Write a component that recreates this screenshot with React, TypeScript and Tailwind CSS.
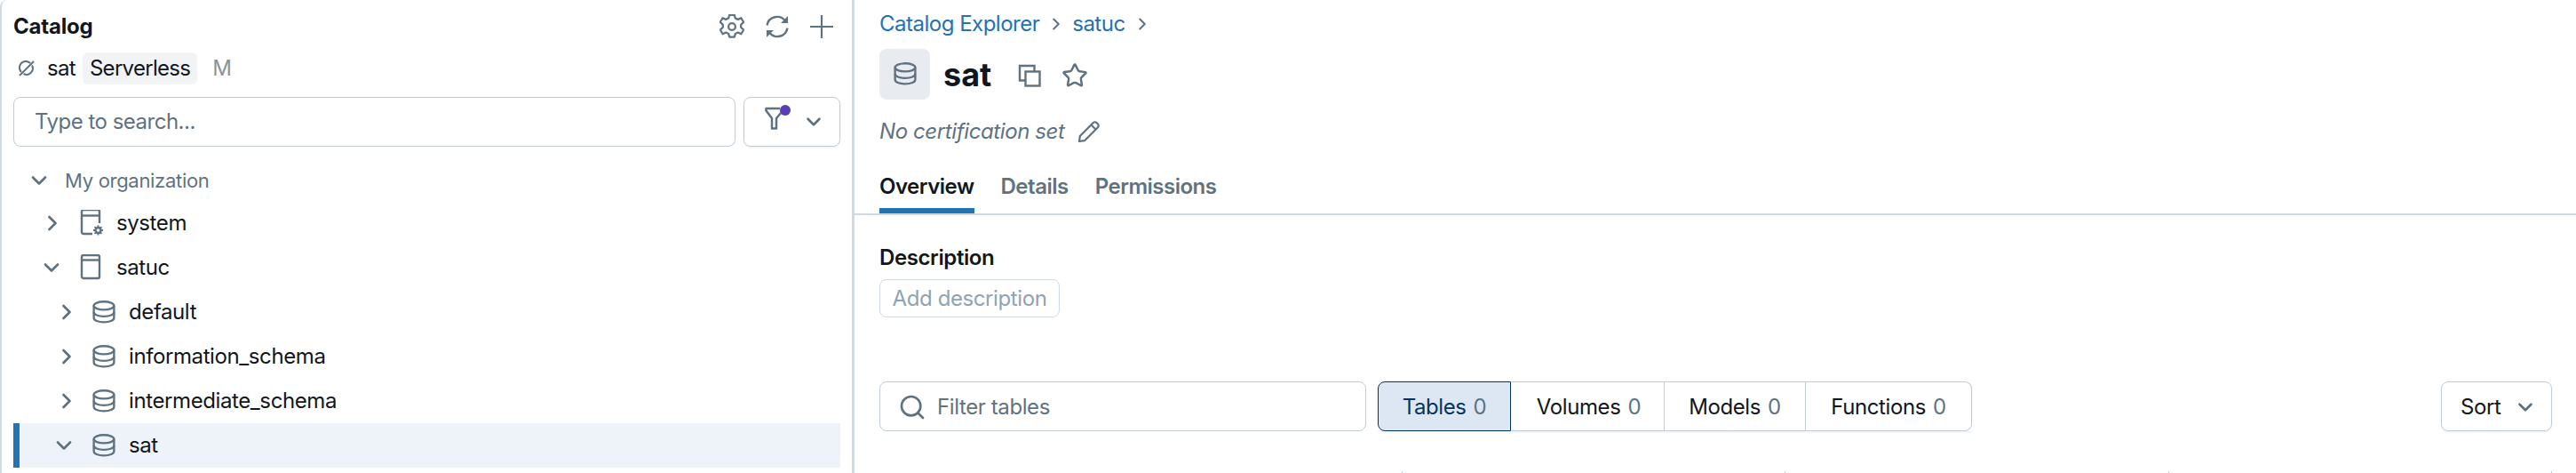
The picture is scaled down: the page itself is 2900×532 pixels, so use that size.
import type { ReactNode } from 'react';
import { ChevronDown, ChevronRight, Search, Star } from 'lucide-react';

const font = "font-['Inter','Liberation_Sans',sans-serif]";

function DatabaseIcon({ className }: { className?: string }) {
  return (
    <svg viewBox="0 0 16 16" fill="none" stroke="currentColor" strokeWidth="1.45" className={className}>
      <ellipse cx="8" cy="3.6" rx="7" ry="2.8" />
      <path d="M1 3.6v8.4c0 1.8 3 3 7 3s7-1.2 7-3V3.6" />
      <path d="M1 8c0 1.8 3 3 7 3s7-1.2 7-3" />
    </svg>
  );
}

function CatalogIcon({ gear }: { gear?: boolean }) {
  return (
    <svg viewBox="0 0 26 30" fill="none" className="h-[30px] w-[26px] shrink-0 text-[#5f7281]">
      <path
        d={gear ? 'M14 27H4a2 2 0 0 1-2-2V2a2 2 0 0 1 2-2h16a2 2 0 0 1 2 2v13' : 'M4 1h16a2 2 0 0 1 2 2v22a2 2 0 0 1-2 2H4a2 2 0 0 1-2-2V3a2 2 0 0 1 2-2z'}
        stroke="currentColor"
        strokeWidth="2.4"
      />
      <path d="M2 6.5h20" stroke="currentColor" strokeWidth="2.4" />
      {gear && (
        <>
          <circle cx="20.5" cy="23" r="3" stroke="currentColor" strokeWidth="2.4" />
          <path d="M20.5 17.5v2.4M20.5 26v2.4M15 23h2.4M23.6 23H26M16.6 19.1l1.7 1.7M22.7 25.2l1.7 1.7M16.6 26.9l1.7-1.7M22.7 20.8l1.7-1.7" stroke="currentColor" strokeWidth="2" />
        </>
      )}
    </svg>
  );
}

function GearIcon() {
  return (
    <svg viewBox="2 2 20 20" fill="none" stroke="currentColor" strokeWidth="1.6" strokeLinejoin="round" className="h-[28px] w-[28px]">
      <path d="M10 2.6h4l.7 2.6 2.1 1 2.6-1.2 2 3.4-2.1 1.9v2.3l2.1 1.9-2 3.4-2.6-1.2-2.1 1-.7 2.6h-4l-.7-2.6-2.1-1-2.6 1.2-2-3.4 2.1-1.9v-2.3L2.5 8.4l2-3.4 2.6 1.2 2.1-1z" />
      <circle cx="12" cy="12" r="2.8" />
    </svg>
  );
}

function RefreshIcon() {
  return (
    <svg viewBox="0 0 26 26" fill="none" className="h-[26px] w-[26px]">
      <path d="M1.5 11.5A11.5 11.5 0 0 1 22 6.5M24.5 14.5A11.5 11.5 0 0 1 4 19.5" stroke="currentColor" strokeWidth="2.4" />
      <path d="M25 1v8h-8zM1 25v-8h8z" fill="currentColor" />
    </svg>
  );
}

function PlusIcon() {
  return (
    <svg viewBox="0 0 26 26" stroke="currentColor" strokeWidth="2.2" className="h-[26px] w-[26px]">
      <path d="M13 0v26M0 13h26" />
    </svg>
  );
}

function FilterIcon() {
  return (
    <svg viewBox="0 0 22 26" fill="none" stroke="currentColor" strokeWidth="2.5" strokeLinejoin="round" className="mb-[8px] h-[26px] w-[22px]">
      <path d="M17 2H1.5v2.5L8 13v11.5h5V13l6-7" />
    </svg>
  );
}

function CopyIcon() {
  return (
    <svg viewBox="0 0 26 26" fill="none" stroke="currentColor" strokeWidth="2.4" className="h-[26px] w-[26px]">
      <path d="M8 18.5H2V2h16.5v6" />
      <rect x="8.5" y="8.5" width="16" height="16" />
    </svg>
  );
}

function PencilIcon() {
  return (
    <svg viewBox="0 0 26 26" fill="none" stroke="currentColor" strokeWidth="2.2" strokeLinejoin="round" className="h-[26px] w-[26px]">
      <path d="M2 24l.8-6L17.8 3a2.6 2.6 0 0 1 3.7 0l1.5 1.5a2.6 2.6 0 0 1 0 3.7L8 23.2z" />
      <path d="M15.5 5.5l5 5" />
    </svg>
  );
}

function SlashedLink() {
  return (
    <svg viewBox="0 0 18 18" fill="none" stroke="currentColor" strokeWidth="2" className="h-[18px] w-[18px] text-[#5f7281]">
      <path d="M3 13A7 7 0 0 1 13 3M15 5.5A7 7 0 0 1 5.5 15" />
      <path d="M1 17L17 1" />
    </svg>
  );
}

function TreeRow({
  name,
  icon,
  open,
  chevronClass,
  active,
}: {
  name: string;
  icon: ReactNode;
  open?: boolean;
  chevronClass: string;
  active?: boolean;
}) {
  const Chevron = open ? ChevronDown : ChevronRight;
  return (
    <div
      className={
        active
          ? 'flex h-[50px] items-center border-l-[7px] border-[#2272b4] bg-[#eef3fa]'
          : 'flex h-[50px] items-center border-l-[7px] border-transparent'
      }
    >
      <div className={chevronClass}>
        <Chevron className="h-[28px] w-[28px] text-[#5f7281]" strokeWidth={2.3} />
      </div>
      {icon}
      <span className="ml-[15px] text-[24px] tracking-[-0.4px] text-[#11171c]">{name}</span>
    </div>
  );
}

function SegmentButton({ label, className }: { label: string; className: string }) {
  return (
    <div className={className}>
      <span>{label}</span>
      <span className="text-[#5f7281]">0</span>
    </div>
  );
}

export default function App() {
  const dbIcon = <DatabaseIcon className="h-[26px] w-[26px] shrink-0 text-[#5f7281]" />;

  return (
    <div className={`flex h-[532px] w-[2900px] overflow-hidden bg-white text-[#11171c] ${font}`}>
      {/* left tree panel */}
      <aside className="w-[962px] shrink-0 rounded-tl-lg border-l-2 border-r-[3px] border-[#d1d9e1] pl-[13px] pr-[13px]">
        <div className="flex h-[59px] items-center justify-between pr-[8px]">
          <h2 className="text-[24px] font-bold tracking-[-0.2px]">Catalog</h2>
          <div className="flex items-center gap-[24px] text-[#5f7281]">
            <GearIcon />
            <RefreshIcon />
            <PlusIcon />
          </div>
        </div>
        <div className="flex h-[36px] items-center pl-[6px] text-[24px] tracking-[-0.7px]">
          <SlashedLink />
          <span className="ml-[14px]">sat</span>
          <span className="ml-[8px] rounded-[6px] bg-[#f2f3f5] px-2 leading-[36px]">Serverless</span>
          <span className="ml-[17px] text-[#8b9299]">M</span>
        </div>
        <div className="mt-[14px] flex gap-[9px]">
          <div className="flex h-[56px] flex-1 items-center rounded-lg border border-[#c0cdd8] pl-[23px] text-[24px] tracking-[-0.5px] text-[#5f7281]">
            Type to search...
          </div>
          <div className="relative flex h-[56px] w-[109px] items-center rounded-lg border border-[#c0cdd8] pl-[23px] text-[#5f7281] shadow-[0_1px_2px_rgba(0,0,0,0.08)]">
            <FilterIcon />
            <span className="absolute left-[40px] top-[8px] h-[12px] w-[12px] rounded-full bg-[#5b3eb5]" />
            <ChevronDown className="ml-[20px] h-[26px] w-[26px]" strokeWidth={2.5} />
          </div>
        </div>
        <div className="mt-[15px] flex h-[46px] items-center pl-[15px] text-[22px] tracking-[-0.3px] text-[#5f7281]">
          <ChevronDown className="h-[28px] w-[28px]" strokeWidth={2.3} />
          <span className="ml-[15px]">My organization</span>
        </div>
        <TreeRow name="system" icon={<CatalogIcon gear />} chevronClass="ml-[23px] mr-[17px]" />
        <TreeRow name="satuc" icon={<CatalogIcon />} open chevronClass="ml-[22px] mr-[18px]" />
        <TreeRow name="default" icon={dbIcon} chevronClass="ml-[39px] mr-[15px]" />
        <TreeRow name="information_schema" icon={dbIcon} chevronClass="ml-[39px] mr-[15px]" />
        <TreeRow name="intermediate_schema" icon={dbIcon} chevronClass="ml-[39px] mr-[15px]" />
        <TreeRow name="sat" icon={dbIcon} open active chevronClass="ml-[36px] mr-[18px]" />
      </aside>

      {/* detail panel */}
      <main className="min-w-0 flex-1">
        <div className="px-[28px]">
          <div className="flex h-[54px] items-center text-[24px] tracking-[-0.5px] text-[#2272b4]">
            <span>Catalog Explorer</span>
            <ChevronRight className="ml-[8px] mr-[7px] h-[22px] w-[22px] text-[#5f7281]" strokeWidth={2.2} />
            <span>satuc</span>
            <ChevronRight className="ml-[8px] h-[22px] w-[22px] text-[#5f7281]" strokeWidth={2.2} />
          </div>
          <div className="flex h-[58px] items-center">
            <div className="flex h-[57px] w-[57px] items-center justify-center rounded-lg bg-[#e8ecf0]">
              <DatabaseIcon className="h-[26px] w-[26px] text-[#5f7281]" />
            </div>
            <h1 className="ml-[15px] mt-[2px] text-[36px] font-bold">sat</h1>
            <div className="ml-[30px] mt-[4px] flex items-center gap-[23px] text-[#5f7281]">
              <CopyIcon />
              <Star className="h-[30px] w-[30px]" strokeWidth={2} />
            </div>
          </div>
          <div className="mt-[18px] flex h-[36px] items-center text-[24px] italic tracking-[-0.4px] text-[#5f7281]">
            <span>No certification set</span>
            <span className="ml-[14px] not-italic">
              <PencilIcon />
            </span>
          </div>
        </div>
        <div className="mt-[20px] flex h-[56px] gap-[30px] border-b-2 border-[#d1d9e1] px-[28px] pt-[6px] text-[24px] font-semibold tracking-[-0.5px] text-[#5f7281]">
          <div className="border-b-[6px] border-[#2272b4] text-[#11171c]">Overview</div>
          <div>Details</div>
          <div>Permissions</div>
        </div>
        <div className="pl-[28px] pr-[27px]">
          <div className="mt-[32px] text-[24px] font-semibold leading-[32px] tracking-[-0.4px]">Description</div>
          <div className="mt-[8px] flex h-[43px] w-[203px] items-center justify-center rounded-lg border border-[#d1d9e1] text-[24px] tracking-[-0.4px] text-[#8fa3b5]">
            Add description
          </div>
          <div className="mt-[72px] flex items-center justify-between">
            <div className="flex items-center">
              <div className="flex h-[56px] w-[548px] items-center rounded-lg border border-[#c0cdd8] pl-[20px] pt-[2px] text-[24px] tracking-[-0.4px] text-[#5f7281]">
                <Search className="h-[32px] w-[32px]" strokeWidth={2} />
                <span className="ml-[12px]">Filter tables</span>
              </div>
              <div className="ml-[13px] flex h-[56px] items-stretch text-[24px] tracking-[-0.4px] shadow-[0_1px_2px_rgba(0,0,0,0.08)]">
                <div className="flex w-[150px] items-center justify-center gap-[8px] rounded-l-lg border border-[#04355d] bg-[#dce7f3] pt-[2px] text-[#04355d]">
                  <span>Tables</span>
                  <span className="text-[#5f7281]">0</span>
                </div>
                <SegmentButton
                  label="Volumes"
                  className="flex w-[173px] items-center justify-center gap-[8px] border-y border-r border-[#c0cdd8] pl-[3px] pt-[2px]"
                />
                <SegmentButton
                  label="Models"
                  className="flex w-[159px] items-center justify-center gap-[8px] border-y border-r border-[#c0cdd8] pt-[2px]"
                />
                <SegmentButton
                  label="Functions"
                  className="flex w-[187px] items-center justify-center gap-[8px] rounded-r-lg border-y border-r border-[#c0cdd8] pt-[2px]"
                />
              </div>
            </div>
            <div className="flex h-[56px] w-[125px] items-center gap-[15px] rounded-lg border border-[#c0cdd8] pl-[21px] pt-px text-[24px] tracking-[-0.4px] shadow-[0_1px_2px_rgba(0,0,0,0.08)]">
              Sort
              <ChevronDown className="h-[26px] w-[26px] text-[#5f7281]" strokeWidth={2.5} />
            </div>
          </div>
          {/* tops of the resize handles of the table below, cut off by the window */}
          <div className="ml-[588px] mt-[45px] flex h-[2px] justify-between">
            <span className="w-px bg-[#c0cdd8]" />
            <span className="w-px bg-[#c0cdd8]" />
            <span className="w-px bg-[#c0cdd8]" />
            <span className="w-px bg-[#c0cdd8]" />
          </div>
        </div>
      </main>
    </div>
  );
}
